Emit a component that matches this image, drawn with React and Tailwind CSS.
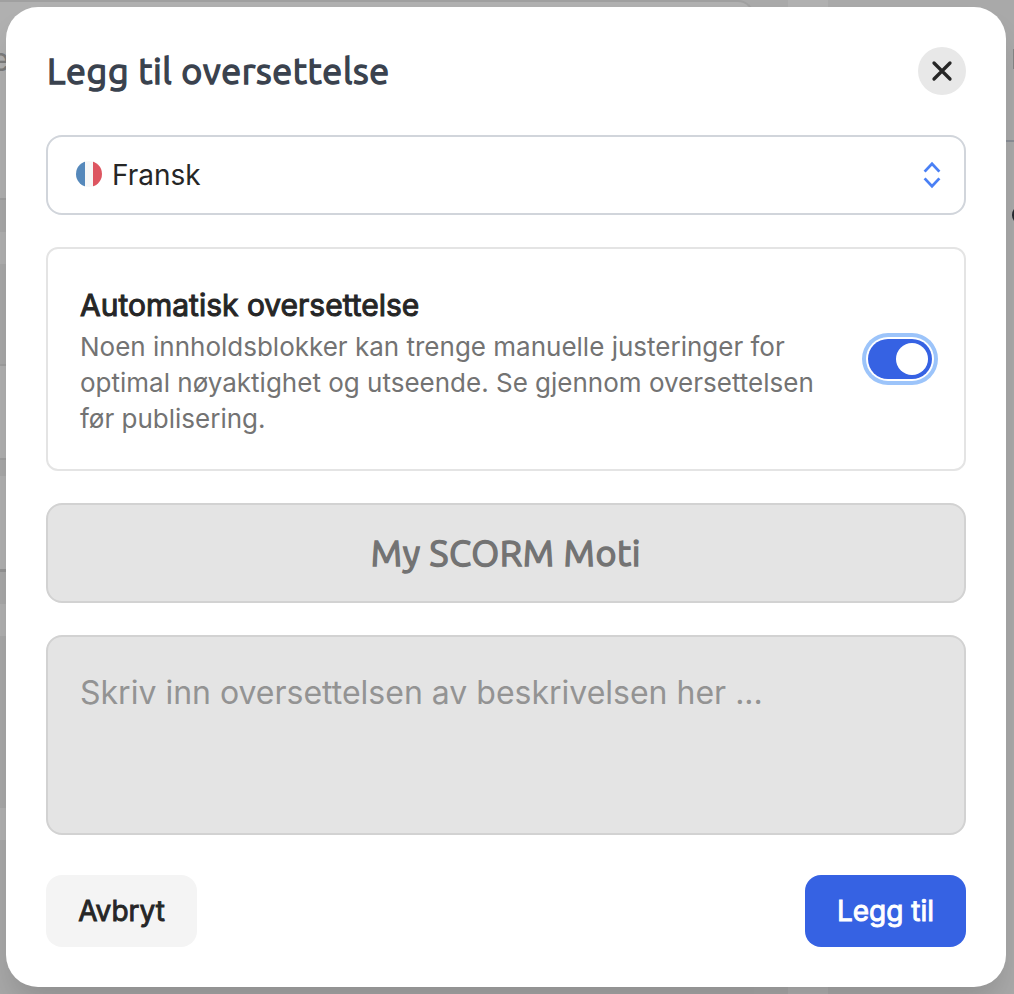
import { useState } from "react";

// strips of the page that stay visible around the dialog
const leftBands = [
  "h-[2px] bg-[#a0a0a0]",
  "h-[196px] bg-[#b0b0b0]",
  "h-[2px] bg-[#9f9f9f]",
  "h-8 bg-[#a8a8a8]",
  "h-8 bg-[#b0b0b0]",
  "h-[100px] bg-[#a8a8a8]",
  "h-[2px] bg-[#9f9f9f]",
  "h-[92px] bg-[#b0b0b0]",
  "h-[2px] bg-[#9f9f9f]",
  "h-4 bg-[#a8a8a8]",
  "h-[93px] bg-[#b0b0b0]",
  "h-[3px] bg-[#949494]",
  "h-8 bg-[#a8a8a8]",
  "h-8 bg-[#b0b0b0]",
  "h-[172px] bg-[#a8a8a8]",
  "h-8 bg-[#b0b0b0]",
  "grow bg-[#a8a8a8]",
];

export default function App() {
  const [auto, setAuto] = useState(true);
  const [description, setDescription] = useState("");

  return (
    <div className="relative flex h-[994px] w-[1014px] overflow-hidden bg-[#a9a9a9] px-[6px] py-[7px] font-['Inter',sans-serif]">
      <Backdrop />

      <div className="relative flex h-[980px] w-[1000px] flex-col rounded-[32px] bg-white px-10 pt-10 shadow-[0_20px_30px_-6px_rgba(0,0,0,0.15)]">
        <header className="flex h-12 items-center justify-between">
          <h2 className="pl-px text-[36px] leading-12 tracking-[0.66px] whitespace-nowrap text-[#3a424e] font-['Ubuntu','Noto_Sans',sans-serif] [-webkit-text-stroke:1.4px_#3a424e]">
            Legg til oversettelse
          </h2>
          <button aria-label="Lukk" className="flex size-12 items-center justify-center rounded-full bg-[#e8e8e8]">
            <CloseIcon />
          </button>
        </header>

        <button className="mt-10 flex h-20 w-full items-center rounded-2xl border-2 border-[#d1d5db] pr-[22px] pl-7">
          <FlagFrance />
          <span className="ml-2.5 grow text-left text-[28px] text-[#262626]">Fransk</span>
          <ChevronsIcon />
        </button>

        <section className="mt-8 flex h-56 items-center justify-between rounded-xl border-2 border-[#e4e4e4] pr-8 pl-8">
          <div className="self-start pt-9">
            <h3 className="text-[30px] leading-10 whitespace-nowrap text-[#262626] [-webkit-text-stroke:1px_#262626]">
              Automatisk oversettelse
            </h3>
            <p className="mt-1 w-[750px] text-[26px] leading-9 text-[#737373]">
              Noen innholdsblokker kan trenge manuelle justeringer for
              optimal nøyaktighet og utseende. Se gjennom oversettelsen
              før publisering.
            </p>
          </div>
          <Toggle checked={auto} onChange={() => setAuto(!auto)} />
        </section>

        <div className="mt-8 flex h-[100px] items-center justify-center rounded-2xl border-2 border-[#d2d2d2] bg-[#e4e4e4] text-[36px] tracking-[0.6px] text-[#737373] font-['Ubuntu','Noto_Sans',sans-serif] [-webkit-text-stroke:1.4px_#737373]">
          <span className="whitespace-nowrap">My SCORM Moti</span>
        </div>

        <textarea
          value={description}
          onChange={(e) => setDescription(e.target.value)}
          placeholder="Skriv inn oversettelsen av beskrivelsen her ..."
          className="mt-8 h-[200px] w-full resize-none rounded-2xl border-2 border-[#d2d2d2] bg-[#e4e4e4] px-8 py-8 text-[32px] leading-12 placeholder:text-[#939393]"
        />

        <footer className="mt-10 flex justify-between text-[28px]">
          <button className="h-[72px] w-[151px] rounded-2xl bg-[#f4f4f4] text-[#262626] [-webkit-text-stroke:0.9px_#262626]">
            Avbryt
          </button>
          <button className="h-[72px] w-[161px] rounded-2xl bg-[#3662e3] text-white [-webkit-text-stroke:0.9px_#fff]">
            Legg til
          </button>
        </footer>
      </div>
    </div>
  );
}

function Backdrop() {
  return (
    <div className="absolute inset-0 flex">
      <div className="flex w-10 flex-col">
        {leftBands.map((band, i) => (
          <div key={i} className={band} />
        ))}
      </div>
      <div className="flex grow flex-col justify-between">
        <div className="h-10 rounded-tr-2xl border-t-2 border-r-2 border-[#a0a0a0] bg-[#b0b0b0]" />
        <div className="h-10 bg-[#a8a8a8]" />
      </div>
      <div className="flex w-[260px] flex-col justify-between pl-[34px]">
        <div className="h-10 w-10 bg-[#b0b0b0]" />
        <div className="h-10 w-10 bg-[#b0b0b0]" />
      </div>

      {/* page content cut off by the dialog */}
      <span className="absolute top-[40px] -left-[9px] text-[32px] leading-10 text-[#7c7c7c]">e</span>
      <div className="absolute top-[49px] right-0 h-5 w-px bg-[#858585]" />
      <div className="absolute top-[140px] right-0 h-[2px] w-4 bg-[#8a8e96]" />
      <div className="absolute top-[205px] -right-[18px] size-5 rounded-full bg-[#262930]" />
    </div>
  );
}

function Toggle({ checked, onChange }) {
  return (
    <button
      role="switch"
      aria-checked={checked}
      onClick={onChange}
      className={`flex h-10 w-16 shrink-0 items-center rounded-full px-1 ring-4 ring-[#9cc4fa] ring-offset-2 ${
        checked ? "justify-end bg-[#3662e3]" : "justify-start bg-gray-300"
      }`}
    >
      <span className="size-8 rounded-full bg-white" />
    </button>
  );
}

/* ---------- Icons ---------- */

function CloseIcon() {
  return (
    <svg width="24" height="24" viewBox="0 0 24 24" fill="none" stroke="#262626" strokeWidth="3.3" strokeLinecap="round">
      <path d="M4 4l16 16M20 4L4 20" />
    </svg>
  );
}

function ChevronsIcon() {
  return (
    <svg width="20" height="28" viewBox="0 0 20 28" fill="none" stroke="#4a80f5" strokeWidth="2.8">
      <path d="M2.6 10.6L10 2.8l7.4 7.8M2.6 17.4l7.4 7.8 7.4-7.8" />
    </svg>
  );
}

function FlagFrance() {
  return (
    <svg width="26" height="26" viewBox="0 0 26 26" className="mb-[2px]">
      <clipPath id="flag">
        <circle cx="13" cy="13" r="13" />
      </clipPath>
      <g clipPath="url(#flag)">
        <path fill="#5588bb" d="M0 0h9v26H0z" />
        <path fill="#f7f7f7" d="M9 0h8v26H9z" />
        <path fill="#dd5560" d="M17 0h9v26h-9z" />
      </g>
    </svg>
  );
}
